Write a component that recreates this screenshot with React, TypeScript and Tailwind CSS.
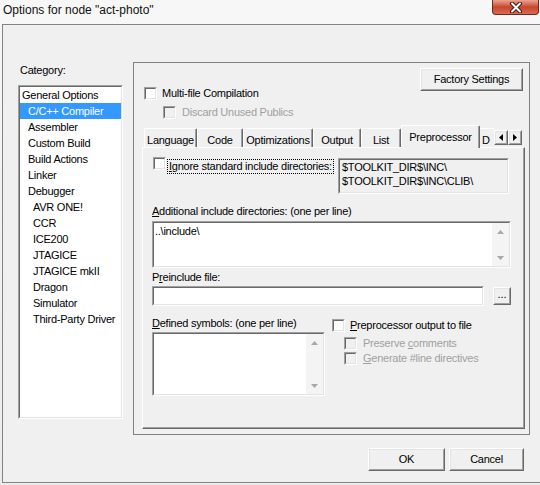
import React from 'react';

type Kid = { children?: React.ReactNode };

const Sunken = ({ className = '', inner = '', children }: { className?: string; inner?: string } & Kid) => (
  <div className={`border border-t-[#a0a0a0] border-l-[#a0a0a0] border-r-white border-b-white ${className}`}>
    <div className={`h-full w-full border border-t-[#696969] border-l-[#696969] border-r-[#e3e3e3] border-b-[#e3e3e3] ${inner}`}>
      {children}
    </div>
  </div>
);

const Raised = ({ className = '', inner = '', children }: { className?: string; inner?: string } & Kid) => (
  <div className={`border border-t-white border-l-white border-r-[#696969] border-b-[#696969] bg-[#f0f0f0] ${className}`}>
    <div className={`h-full w-full border border-t-[#e3e3e3] border-l-[#e3e3e3] border-r-[#a0a0a0] border-b-[#a0a0a0] ${inner}`}>
      {children}
    </div>
  </div>
);

const Check = ({ disabled }: { disabled?: boolean }) => (
  <Sunken className="w-[13px] h-[13px] shrink-0" inner={disabled ? 'bg-[#f0f0f0]' : 'bg-white'} />
);

const VScroll = () => (
  <div className="w-[17px] h-full flex flex-col justify-between bg-[#f4f4f4]">
    <div className="h-[17px] flex items-center justify-center">
      <svg width="7" height="4" viewBox="0 0 7 4">
        <path d="M3.5 0 L7 4 L0 4 Z" fill="#a8a8a8" />
      </svg>
    </div>
    <div className="h-[17px] flex items-center justify-center">
      <svg width="7" height="4" viewBox="0 0 7 4">
        <path d="M0 0 L7 0 L3.5 4 Z" fill="#a8a8a8" />
      </svg>
    </div>
  </div>
);

const Tab = ({ label, w }: { label: string; w: string }) => (
  <div
    className={`${w} h-[19px] shrink-0 border-t border-l border-r border-t-white border-l-white border-r-[#696969] rounded-t-[2px] shadow-[inset_-1px_0_0_#a0a0a0] text-center pt-[5px] whitespace-nowrap overflow-hidden`}
  >
    {label}
  </div>
);

const categories: [string, number][] = [
  ['General Options', 0],
  ['C/C++ Compiler', 1],
  ['Assembler', 1],
  ['Custom Build', 1],
  ['Build Actions', 1],
  ['Linker', 1],
  ['Debugger', 1],
  ['AVR ONE!', 2],
  ['CCR', 2],
  ['ICE200', 2],
  ['JTAGICE', 2],
  ['JTAGICE mkII', 2],
  ['Dragon', 2],
  ['Simulator', 2],
  ['Third-Party Driver', 2],
];

const indent = ['pl-[2px]', 'pl-[8px]', 'pl-[13px]'];

export default function App() {
  return (
    <div className="w-[540px] h-[485px] overflow-hidden flex flex-col bg-gradient-to-b from-[#f7f7f7] to-[#ececec] font-['Liberation_Sans',Arial,sans-serif] text-black">
      {/* title bar */}
      <div className="h-[24px] flex items-start shrink-0">
        <div className="pl-[3px] pt-[2px] text-[12px] leading-[16px] text-[#111]">Options for node "act-photo"</div>
        <div className="ml-auto mr-[1px] w-[47px] h-[15px] rounded-b-[4px] border border-t-0 border-[#6e2a1f] bg-gradient-to-b from-[#e8a494] via-[#c9452c] to-[#d66a52] flex items-center justify-center">
          <svg width="14" height="11" viewBox="0 0 14 11">
            <path d="M3 1.5 L11 9.5 M11 1.5 L3 9.5" stroke="#4d1910" strokeWidth="4" strokeLinecap="round" />
            <path d="M3 1.5 L11 9.5 M11 1.5 L3 9.5" stroke="#ffffff" strokeWidth="2" strokeLinecap="round" />
          </svg>
        </div>
      </div>

      {/* client area */}
      <div className="ml-[2px] w-[545px] h-[459px] shrink-0 border border-[#838383] bg-[#f0f0f0] text-[11px] leading-[13px] tracking-[-0.25px] flex flex-col">
        <div className="pt-[37px] flex items-start">
          {/* category list */}
          <div className="ml-[15px] w-[105px] flex flex-col">
            <div className="ml-[2px] mt-[2px]">Category:</div>
            <Sunken className="mt-[8px] h-[334px]" inner="bg-white">
              {categories.map(([name, level], i) => (
                <div
                  key={name}
                  className={`h-[16px] leading-[16px] whitespace-nowrap ${indent[level]} ${i === 1 ? 'bg-[#3399ff] text-white' : ''}`}
                >
                  {name}
                </div>
              ))}
            </Sunken>
          </div>

          {/* options pane */}
          <div className="ml-[10px] w-[397px] h-[373px] border border-[#808080] flex flex-col">
            <div className="mt-[5px] pr-[6px] flex justify-end">
              <Raised className="w-[103px] h-[23px]" inner="flex items-center justify-center">
                Factory Settings
              </Raised>
            </div>
            <div className="mt-[-4px] ml-[10px] flex items-center gap-[5px]">
              <Check />
              <span>Multi-file Compilation</span>
            </div>
            <div className="mt-[6px] ml-[29px] flex items-center gap-[6px] text-[#a0a0a0]">
              <Check disabled />
              <span>Discard Unused Publics</span>
            </div>

            {/* tab strip */}
            <div className="mt-[6px] ml-[8px] h-[22px] flex items-end">
              <div className="ml-[2px]" />
              <Tab label="Language" w="w-[53px]" />
              <Tab label="Code" w="w-[46px]" />
              <Tab label="Optimizations" w="w-[70px]" />
              <Tab label="Output" w="w-[48px]" />
              <Tab label="List" w="w-[40px]" />
              <div className="relative z-10 w-[79px] h-[23px] mb-[-1px] shrink-0 bg-[#f0f0f0] border-t border-l border-r border-t-white border-l-white border-r-[#696969] rounded-t-[2px] shadow-[inset_-1px_0_0_#a0a0a0] text-center pt-[5px]">
                Preprocessor
              </div>
              <div className="w-[14px] h-[19px] shrink-0 border-t border-t-white pt-[5px] pl-[2px] overflow-hidden">D</div>
              <div className="self-end mb-[2px] flex">
                <Raised className="w-[14px] h-[15px]" inner="flex items-center justify-center">
                  <svg width="4" height="7" viewBox="0 0 4 7">
                    <path d="M4 0 L4 7 L0 3.5 Z" fill="#000" />
                  </svg>
                </Raised>
                <Raised className="w-[14px] h-[15px]" inner="flex items-center justify-center">
                  <svg width="4" height="7" viewBox="0 0 4 7">
                    <path d="M0 0 L0 7 L4 3.5 Z" fill="#000" />
                  </svg>
                </Raised>
              </div>
            </div>

            {/* tab page */}
            <div className="ml-[8px] w-[383px] h-[282px] border border-t-white border-l-white border-r-[#696969] border-b-[#696969] shadow-[inset_-1px_-1px_0_#a0a0a0] pt-[9px] pl-[9px] flex flex-col">
              <div className="flex items-start">
                <div className="w-[186px] flex items-start">
                  <div className="ml-[1px]">
                    <Check />
                  </div>
                  <div className="ml-[1px] mt-[2px] border border-dotted border-black px-[1px] whitespace-nowrap">
                    <u>I</u>gnore standard include directories:
                  </div>
                </div>
                <Sunken className="w-[171px] h-[36px] mt-[1px]" inner="bg-[#f0f0f0] pl-[2px] leading-[14px]">
                  <div>$TOOLKIT_DIR$\INC\</div>
                  <div>$TOOLKIT_DIR$\INC\CLIB\</div>
                </Sunken>
              </div>

              <div className="mt-[11px]">
                <u>A</u>dditional include directories: (one per line)
              </div>
              <Sunken className="mt-[3px] w-[359px] h-[47px]" inner="bg-white flex">
                <div className="flex-1 pl-[1px] pt-[2px]">..\include\</div>
                <VScroll />
              </Sunken>

              <div className="mt-[3px]">
                P<u>r</u>einclude file:
              </div>
              <div className="mt-[2px] flex items-start">
                <Sunken className="w-[332px] h-[20px]" inner="bg-white" />
                <Raised className="ml-[9px] mt-[1px] w-[18px] h-[18px]" inner="flex items-end justify-center pb-[2px] tracking-normal">
                  ...
                </Raised>
              </div>

              <div className="mt-[11px] flex items-start">
                <div className="w-[173px] flex flex-col">
                  <div>
                    <u>D</u>efined symbols: (one per line)
                  </div>
                  <Sunken className="mt-[2px] h-[64px]" inner="bg-white flex">
                    <div className="flex-1" />
                    <VScroll />
                  </Sunken>
                </div>
                <div className="ml-[7px] flex flex-col">
                  <div className="mt-[2px] flex items-center gap-[5px]">
                    <Check />
                    <span>
                      <u>P</u>reprocessor output to file
                    </span>
                  </div>
                  <div className="mt-[5px] ml-[12px] flex items-center gap-[6px] text-[#a0a0a0]">
                    <Check disabled />
                    <span>
                      Preserve <u>c</u>omments
                    </span>
                  </div>
                  <div className="mt-[2px] ml-[12px] flex items-center gap-[6px] text-[#a0a0a0]">
                    <Check disabled />
                    <span>
                      <u>G</u>enerate #line directives
                    </span>
                  </div>
                </div>
              </div>
            </div>
          </div>
        </div>

        {/* dialog buttons */}
        <div className="mt-[13px] pl-[365px] flex gap-[4px]">
          <Raised className="w-[77px] h-[23px]" inner="flex items-center justify-center">
            OK
          </Raised>
          <Raised className="w-[75px] h-[23px]" inner="flex items-center justify-center">
            Cancel
          </Raised>
        </div>
      </div>
    </div>
  );
}
